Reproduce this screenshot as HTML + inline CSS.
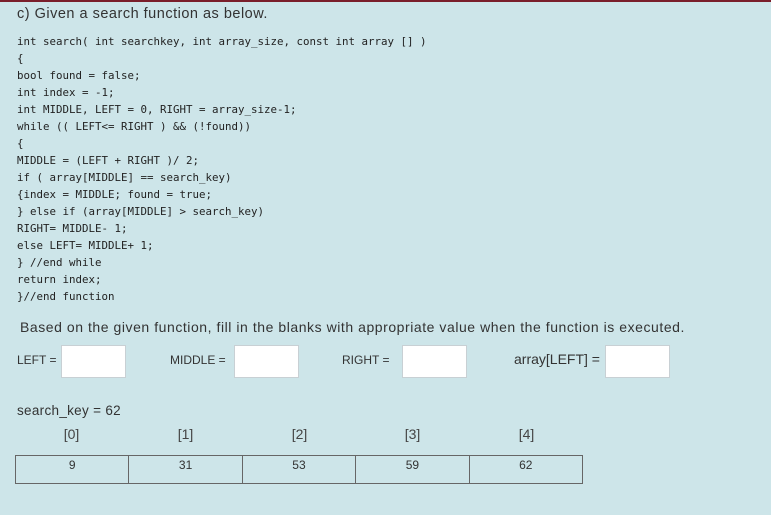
<!DOCTYPE html>
<html><head><meta charset="utf-8"><style>
body{margin:0;width:771px;height:515px;background:#cde5e9;font-family:"Liberation Sans",sans-serif;color:#333;position:relative;overflow:hidden}
.top{position:absolute;left:0;top:0;width:771px;height:2px;background:#7a1f2b}
.a{position:absolute;white-space:pre}
.code{position:absolute;left:17px;top:33px;font-family:"DejaVu Sans Mono",monospace;font-size:10.8px;line-height:17px;color:#222;white-space:pre}
.box{position:absolute;width:63px;height:31px;background:#fff;border:1px solid #c8d0d4}
table{position:absolute;left:15px;top:455px;width:568px;height:29px;border-collapse:collapse;border:1.5px solid #222}
td{border:1px solid #666;text-align:center;vertical-align:top;font-size:12px;padding:2px 0 0;width:20%}
.idx{position:absolute;top:426px;font-size:14px;color:#444;width:113px;text-align:center}
</style></head><body>
<div class="top"></div>
<div class="a" style="left:17px;top:6px;font-size:14.5px;letter-spacing:0.5px">c) Given a search function as below.</div>
<div class="code">int search( int searchkey, int array_size, const int array [] )
{
bool found = false;
int index = -1;
int MIDDLE, LEFT = 0, RIGHT = array_size-1;
while (( LEFT&lt;= RIGHT ) &amp;&amp; (!found))
{
MIDDLE = (LEFT + RIGHT )/ 2;
if ( array[MIDDLE] == search_key)
{index = MIDDLE; found = true;
} else if (array[MIDDLE] &gt; search_key)
RIGHT= MIDDLE- 1;
else LEFT= MIDDLE+ 1;
} //end while
return index;
}//end function</div>
<div class="a" style="left:20px;top:319px;font-size:14px;letter-spacing:0.55px">Based on the given function, fill in the blanks with appropriate value when the function is executed.</div>
<div class="a" style="left:17px;top:353px;font-size:12px">LEFT =</div>
<div class="box" style="left:61px;top:345px"></div>
<div class="a" style="left:170px;top:353px;font-size:12px">MIDDLE =</div>
<div class="box" style="left:234px;top:345px"></div>
<div class="a" style="left:342px;top:353px;font-size:12px">RIGHT =</div>
<div class="box" style="left:402px;top:345px"></div>
<div class="a" style="left:514px;top:351px;font-size:14px">array[LEFT] =</div>
<div class="box" style="left:605px;top:345px"></div>
<div class="a" style="left:17px;top:403px;font-size:13.5px;letter-spacing:0.3px">search_key = 62</div>
<div class="idx" style="left:15px">[0]</div>
<div class="idx" style="left:129px">[1]</div>
<div class="idx" style="left:243px">[2]</div>
<div class="idx" style="left:356px">[3]</div>
<div class="idx" style="left:470px">[4]</div>
<table><tr><td>9</td><td>31</td><td>53</td><td>59</td><td>62</td></tr></table>
</body></html>
